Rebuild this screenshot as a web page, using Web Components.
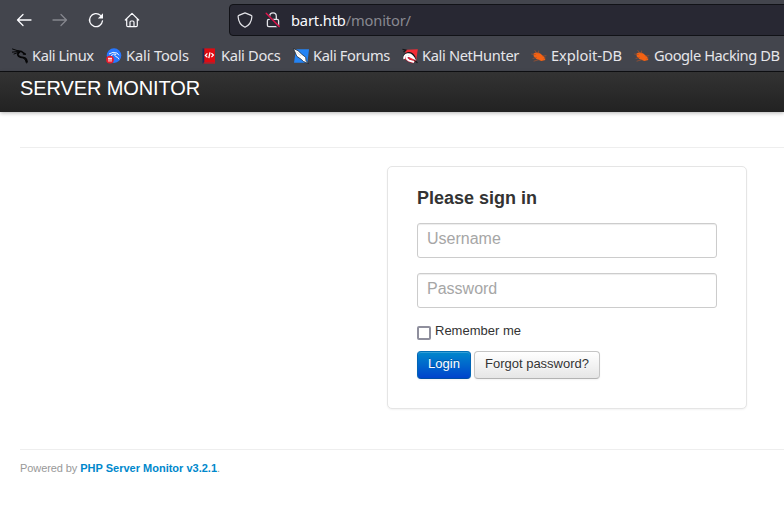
<!DOCTYPE html>
<html lang="en"><head><meta charset="utf-8"><title>Server Monitor</title>
<style>html,body{margin:0;height:100%;background:#fff;overflow:hidden}</style></head>
<body><monitor-page></monitor-page>
<script>
const define = (name, html) => customElements.define(name, class extends HTMLElement {
  constructor() {
    super();
    const t = document.createElement('template');
    t.innerHTML = html;
    this.attachShadow({mode: 'open'}).append(t.content.cloneNode(true));
  }
});

const ICONS = {
  back: '<path d="M15 8H1.5M7 2.5L1.5 8L7 13.5" fill="none" stroke="#fbfbfe" stroke-width="1.3" stroke-linecap="round" stroke-linejoin="round"/>',
  forward: '<path d="M1 8H14.5M9 2.5L14.5 8L9 13.5" fill="none" stroke="#85868d" stroke-width="1.3" stroke-linecap="round" stroke-linejoin="round"/>',
  reload: '<path d="M12.5 3.4A6.5 6.5 0 1 0 14.5 8.8" fill="none" stroke="#fbfbfe" stroke-width="1.3" stroke-linecap="round"/><path d="M15 1.3V6.5H9.8Z" fill="#fbfbfe"/>',
  home: '<path d="M1.3 8L8 1.4L14.7 8M2.7 7V13.4Q2.7 14.6 3.9 14.6H12.1Q13.3 14.6 13.3 13.4V7M6 14.2V10.2Q6 9 7.2 9H8.8Q10 9 10 10.2V14.2" fill="none" stroke="#fbfbfe" stroke-width="1.2" stroke-linecap="round" stroke-linejoin="round"/>',
  shield: '<path d="M8 .9L14.2 3.4Q15 3.7 14.9 4.6C14.6 9.6 12 13.4 8 15.2C4 13.4 1.4 9.6 1.1 4.6Q1 3.7 1.8 3.4Z" fill="none" stroke="#e4e4e9" stroke-width="1.2" stroke-linejoin="round"/>',
  lock: '<path d="M4.7 7V4.2A3.3 3.3 0 0 1 11.3 4.2V7M3.8 7.3H12.2Q13.6 7.3 13.6 8.7V13.2Q13.6 14.6 12.2 14.6H3.8Q2.4 14.6 2.4 13.2V8.7Q2.4 7.3 3.8 7.3Z" fill="none" stroke="#e4e4e9" stroke-width="1.3"/><path d="M1.2 1.8L13.8 15" stroke="#2a2a35" stroke-width="2.6"/><path d="M1.2 1.3L14.2 14.5" stroke="#e2124b" stroke-width="1.4" stroke-linecap="round"/>',
  linux: '<g fill="none" stroke="#060607" stroke-linecap="round"><path d="M.5 1L6.5 3M.4 4.1L5.2 3.6M2 6L7 4.1" stroke-width="1"/><path d="M5.5 3Q9.5 2.5 11.5 5L13.8 6.3L11.5 6.1" stroke-width="1.5"/><path d="M7.5 4Q4.8 6.1 6.5 8Q8 9.4 11.5 9.6Q14.5 10 15 13.8" stroke-width="1.8"/><path d="M11.5 10Q13.8 11.5 14.5 15" stroke-width="1"/></g>',
  tools: '<circle cx="8" cy="7.6" r="7.3" fill="#2777ff"/><g fill="none" stroke="#fff"><path d="M3 6Q7 3.2 11 5L13 7.3M5 7.7Q7.5 5.2 10 6.3Q8 7.6 9.8 8.6Q12 8.8 13 11.3" stroke-width=".9"/></g><circle cx="4" cy="11.6" r="3.9" fill="#e91c2b"/><path d="M2 10.3H6M3 10.3V13.7M5 10.3V13.7" stroke="#fff" stroke-width="1"/>',
  docs: '<path d="M2.5.4H14V15.5H2.5Z" fill="#df0b12"/><path d="M1.5.4H3.3V15.5H1.5Z" fill="#1a2c59"/><path d="M3 14.2H14V15.6H2Z" fill="#a22835"/><path d="M6.4 5.4L4.4 7.4L6.4 9.4M10.4 5.1L12.4 7.1L10.4 9.1M9 4.4L7.8 10.1" fill="none" stroke="#fff" stroke-width="1.3"/>',
  forums: '<path d="M3 1.2H16L14.4 14.8H1Z" fill="#2484f5"/><path d="M.3.5L5 2.7L8.7 6.2L12.7 9.3L13 12.7L15.7 15.6L10.5 13.5L7.8 11L3.8 8.3L2 4Z" fill="#fff" stroke="#151c26" stroke-width=".7"/><path d="M3.5 4L8 8" fill="none" stroke="#b3bdc8" stroke-width=".6"/>',
  hunter: '<path d="M4 1.8L15.8 1.3L14 13.8L9.8 14.3L2 11Z" fill="#f32c35"/><path d="M.5 1.3L4 2L1.5 4M12.5 12.5L15.5 14.8" fill="none" stroke="#17171b" stroke-width="1.2"/><path d="M2 10.5Q1.5 6.5 5.5 5.4Q9.5 4.4 12.2 8.8L13 12" fill="none" stroke="#17171b" stroke-width="2.2"/><path d="M8.3 9.3Q6.8 8 5 9.3Q4.5 11 7 12.6L11.5 14" fill="none" stroke="#b30f2d" stroke-width="3"/><path d="M2.2 11Q1.6 7.3 5.6 6.2Q9.4 5.5 11.9 10.3L9 8.9Q6.8 7.2 4.6 8.6Q3.7 10.5 7.2 12.6L12 14" fill="none" stroke="#fff" stroke-width="1.9"/>',
  bug: '<path d="M2.6 5.4Q5.8 3.6 9.6 5.8L13.3 9L14.4 12L10.3 12.9L5.4 10.9L2.6 8.2Z" fill="#f46213"/><path d="M.3 6L4.8 6.6M3.6 2.2L6 5.4M7.6 2.6V5.5M1.6 10.6L5.8 9.4M2.6 13.2L8.2 11.6M11.5 8.1L15.4 7.7M12.5 10.9L14.7 10" fill="none" stroke="#aa512b" stroke-width=".7"/>'
};

customElements.define('ui-icon', class extends HTMLElement {
  connectedCallback() {
    if (this.shadowRoot) return;
    this.attachShadow({mode: 'open'}).innerHTML = `<style>:host{display:block;flex:none;width:16px;height:16px}svg{display:block}</style><svg width="16" height="16" viewBox="0 0 16 16">${ICONS[this.getAttribute('name')]}</svg>`;
  }
});

define('url-bar', `<style>
:host{display:flex;align-items:center;box-sizing:border-box;height:32px;flex:1;min-width:0;margin-right:-10px;padding-left:7px;border:1px solid #111217;border-radius:4px;background:#282833;font:14.67px "Noto Sans",sans-serif;letter-spacing:-.15px;color:#898991}
ui-icon+ui-icon{margin:0 10px 0 12px}span{white-space:pre}b{font-weight:400;color:#fbfbfe}
</style><ui-icon name="shield"></ui-icon><ui-icon name="lock"></ui-icon><span><b>bart.htb</b>/monitor/</span>`);

define('book-mark', `<style>
:host{display:flex;align-items:center;flex:none;gap:4px;white-space:nowrap;font:14.67px/20px "Noto Sans",sans-serif;color:#e6e6ea}
span{padding-bottom:2px}
</style><slot name="icon"></slot><span><slot></slot></span>`);

// icon, title, slot width, tracking
const marks = [['linux','Kali Linux',94,-.43],['tools','Kali Tools',95,-.15],['docs','Kali Docs',92,-.33],['forums','Kali Forums',109,-.36],['hunter','Kali NetHunter',129,-.35],['bug','Exploit-DB',103,-.05],['bug','Google Hacking DB',150,-.45]];
define('browser-chrome', `<style>
:host{display:block;box-sizing:border-box;height:72px;background:#43454d;border-bottom:1px solid #0f1013;overflow:hidden}
nav{display:flex;align-items:center;height:40px;gap:20px;padding-left:16px}
url-bar{margin-left:69px}
.marks{display:flex;align-items:center;height:31px;padding-left:12px}
</style><nav><ui-icon name="back"></ui-icon><ui-icon name="forward"></ui-icon><ui-icon name="reload"></ui-icon><ui-icon name="home"></ui-icon><url-bar></url-bar></nav>
<div class="marks">${marks.map(([i,t,w,s]) => `<book-mark style="width:${w}px;letter-spacing:${s}px"><ui-icon slot="icon" name="${i}"></ui-icon>${t}</book-mark>`).join('')}</div>`);

define('site-header', `<style>
:host{display:block;box-sizing:border-box;height:40px;padding:6px 20px 0;background:linear-gradient(#333,#222);box-shadow:0 1px 4px rgba(0,0,0,.3);font:20px/20px "Liberation Sans",sans-serif;letter-spacing:-.11px;color:#fff}
</style><slot></slot>`);

define('text-field', `<style>
:host{display:block;height:35px;margin-bottom:15px}
input{display:block;box-sizing:border-box;width:100%;height:35px;margin:0;padding:7px 9px 10px;border:1px solid #ccc;border-radius:3px;background:#fff;box-shadow:inset 0 1px 1px rgba(0,0,0,.075);font:16px/16px "Liberation Sans",sans-serif;color:#555}
input::placeholder{color:#a6a6a6;opacity:1}
</style><input>`);
customElements.define('named-field', class extends customElements.get('text-field') {
  connectedCallback() { this.shadowRoot.querySelector('input').placeholder = this.getAttribute('label'); }
});

define('push-button', `<style>
:host{display:block;flex:none}
button{display:block;box-sizing:border-box;width:100%;height:28px;margin:0;padding:0 0 2px;border:1px solid #c5c5c5;border-bottom-color:#b3b3b3;border-radius:4px;background:linear-gradient(#fff,#e6e6e6);box-shadow:inset 0 1px 0 rgba(255,255,255,.2),0 1px 2px rgba(0,0,0,.05);font:13px/20px "Liberation Sans",sans-serif;color:#333;text-shadow:0 1px 1px rgba(255,255,255,.75)}
:host([primary]) button{border-color:#0070b8 #0064b5 #004da6;background:linear-gradient(#08c,#04c);color:#fff;text-shadow:0 -1px 0 rgba(0,0,0,.25)}
</style><button><slot></slot></button>`);

define('sign-in-form', `<style>
:host{display:block;box-sizing:border-box;width:360px;height:243px;padding:21px 29px 29px;border:1px solid #e5e5e5;border-radius:5px;background:#fff;box-shadow:0 1px 2px rgba(0,0,0,.05);font:13px/20px "Liberation Sans",sans-serif;color:#333}
h2{margin:0 0 15px;font-size:18px;line-height:20px}
label{display:flex;height:28px;gap:4px;line-height:16px}
input{appearance:none;box-sizing:border-box;width:14px;height:14px;margin:3px 0 0;border:2px solid #8f8f9d;border-radius:2px;background:#fff}
.buttons{display:flex;gap:3px}
</style><h2>Please sign in</h2><named-field label="Username"></named-field><named-field label="Password"></named-field>
<label><input type="checkbox"><span>Remember me</span></label>
<div class="buttons"><push-button primary style="width:54px">Login</push-button><push-button style="width:126px">Forgot password?</push-button></div>`);

define('site-footer', `<style>
:host{display:block;border-top:1px solid #eee;padding-top:8px;font:11px/20px "Liberation Sans",sans-serif;color:#999}
span{letter-spacing:-.08px}
a{color:#08c;font-weight:700;text-decoration:none}
</style><span>Powered by </span><a href="#">PHP Server Monitor v3.2.1</a>.`);

define('monitor-page', `<style>
:host{display:block;height:100%;overflow:hidden}
main{padding:35px 0 0 20px}
.form{border-top:1px solid #eee;padding:18px 37px 40px 0;display:flex;justify-content:flex-end}
</style><browser-chrome></browser-chrome><site-header>SERVER MONITOR</site-header><main><div class="form"><sign-in-form></sign-in-form></div><site-footer></site-footer></main>`);
</script></body></html>
